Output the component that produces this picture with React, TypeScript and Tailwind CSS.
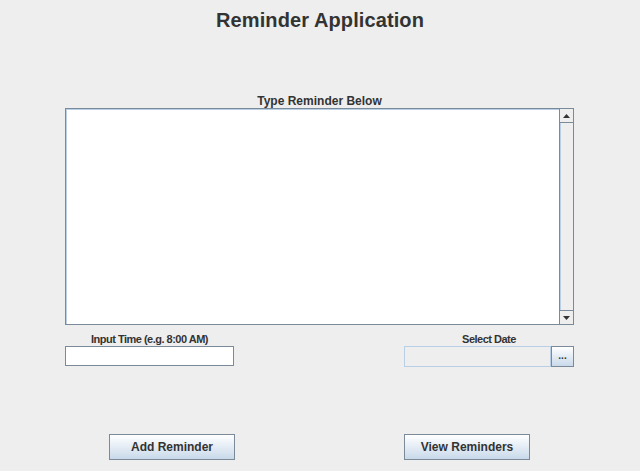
import React from 'react';

function ArrowUp() {
  return (
    <svg width="7" height="4" viewBox="0 0 7 4">
      <polygon points="3.5,0 7,4 0,4" fill="#333333" />
    </svg>
  );
}

function ArrowDown() {
  return (
    <svg width="7" height="4" viewBox="0 0 7 4">
      <polygon points="0,0 7,0 3.5,4" fill="#333333" />
    </svg>
  );
}

export default function App() {
  return (
    <div
      className="w-[640px] h-[471px] bg-[#eeeeee] flex flex-col text-[#333333] overflow-hidden"
      style={{ fontFamily: '"Liberation Sans", Arial, sans-serif' }}
    >
      <h1 className="text-[20px] leading-[22px] font-bold text-center mt-[9px] tracking-[0.1px]">Reminder Application</h1>

      <div className="mt-[63px] ml-[65px] w-[509px] flex flex-col">
        <div className="text-[12px] leading-[14px] font-bold text-center">Type Reminder Below</div>
        <div className="h-[217px] flex border border-[#7a8a99] bg-white">
          <textarea className="flex-1 resize-none outline-none bg-white border-l border-t border-[#b8cfe5]" />
          <div className="w-[14px] flex flex-col bg-[#eeeeee] border-l border-[#7a8a99]">
            <div className="h-[14px] flex items-center justify-center bg-[#eeeeee] border-b border-[#7a8a99]">
              <ArrowUp />
            </div>
            <div className="flex-1 border-l border-[#b8cfe5]" />
            <div className="h-[14px] flex items-center justify-center bg-[#eeeeee] border-t border-[#7a8a99]">
              <ArrowDown />
            </div>
          </div>
        </div>
      </div>

      <div className="mt-[8px] ml-[65px] w-[509px] flex justify-between">
        <div className="w-[169px] flex flex-col">
          <div className="text-[11px] leading-[13px] font-bold text-center tracking-[-0.5px]">Input Time (e.g. 8:00 AM)</div>
          <input
            type="text"
            className="h-[20px] bg-white border border-[#7a8a99] outline-none px-1 text-[12px]"
          />
        </div>
        <div className="w-[170px] flex flex-col">
          <div className="text-[11px] leading-[13px] font-bold text-center tracking-[-0.5px]">Select Date</div>
          <div className="flex h-[21px]">
            <div className="w-[147px] bg-[#eeeeee] border border-[#b8cfe5]" />
            <button className="w-[23px] border border-[#7a8a99] bg-gradient-to-b from-white to-[#c9d9ea] text-[10px] leading-[10px] font-bold flex items-end justify-center pb-[5px]">
              ...
            </button>
          </div>
        </div>
      </div>

      <div className="mt-[67px] flex">
        <button className="ml-[109px] w-[126px] h-[26px] border border-[#7a8a99] bg-gradient-to-b from-white to-[#c9d9ea] text-[12px] font-bold">
          Add Reminder
        </button>
        <button className="ml-[169px] w-[126px] h-[26px] border border-[#7a8a99] bg-gradient-to-b from-white to-[#c9d9ea] text-[12px] font-bold">
          View Reminders
        </button>
      </div>
    </div>
  );
}
